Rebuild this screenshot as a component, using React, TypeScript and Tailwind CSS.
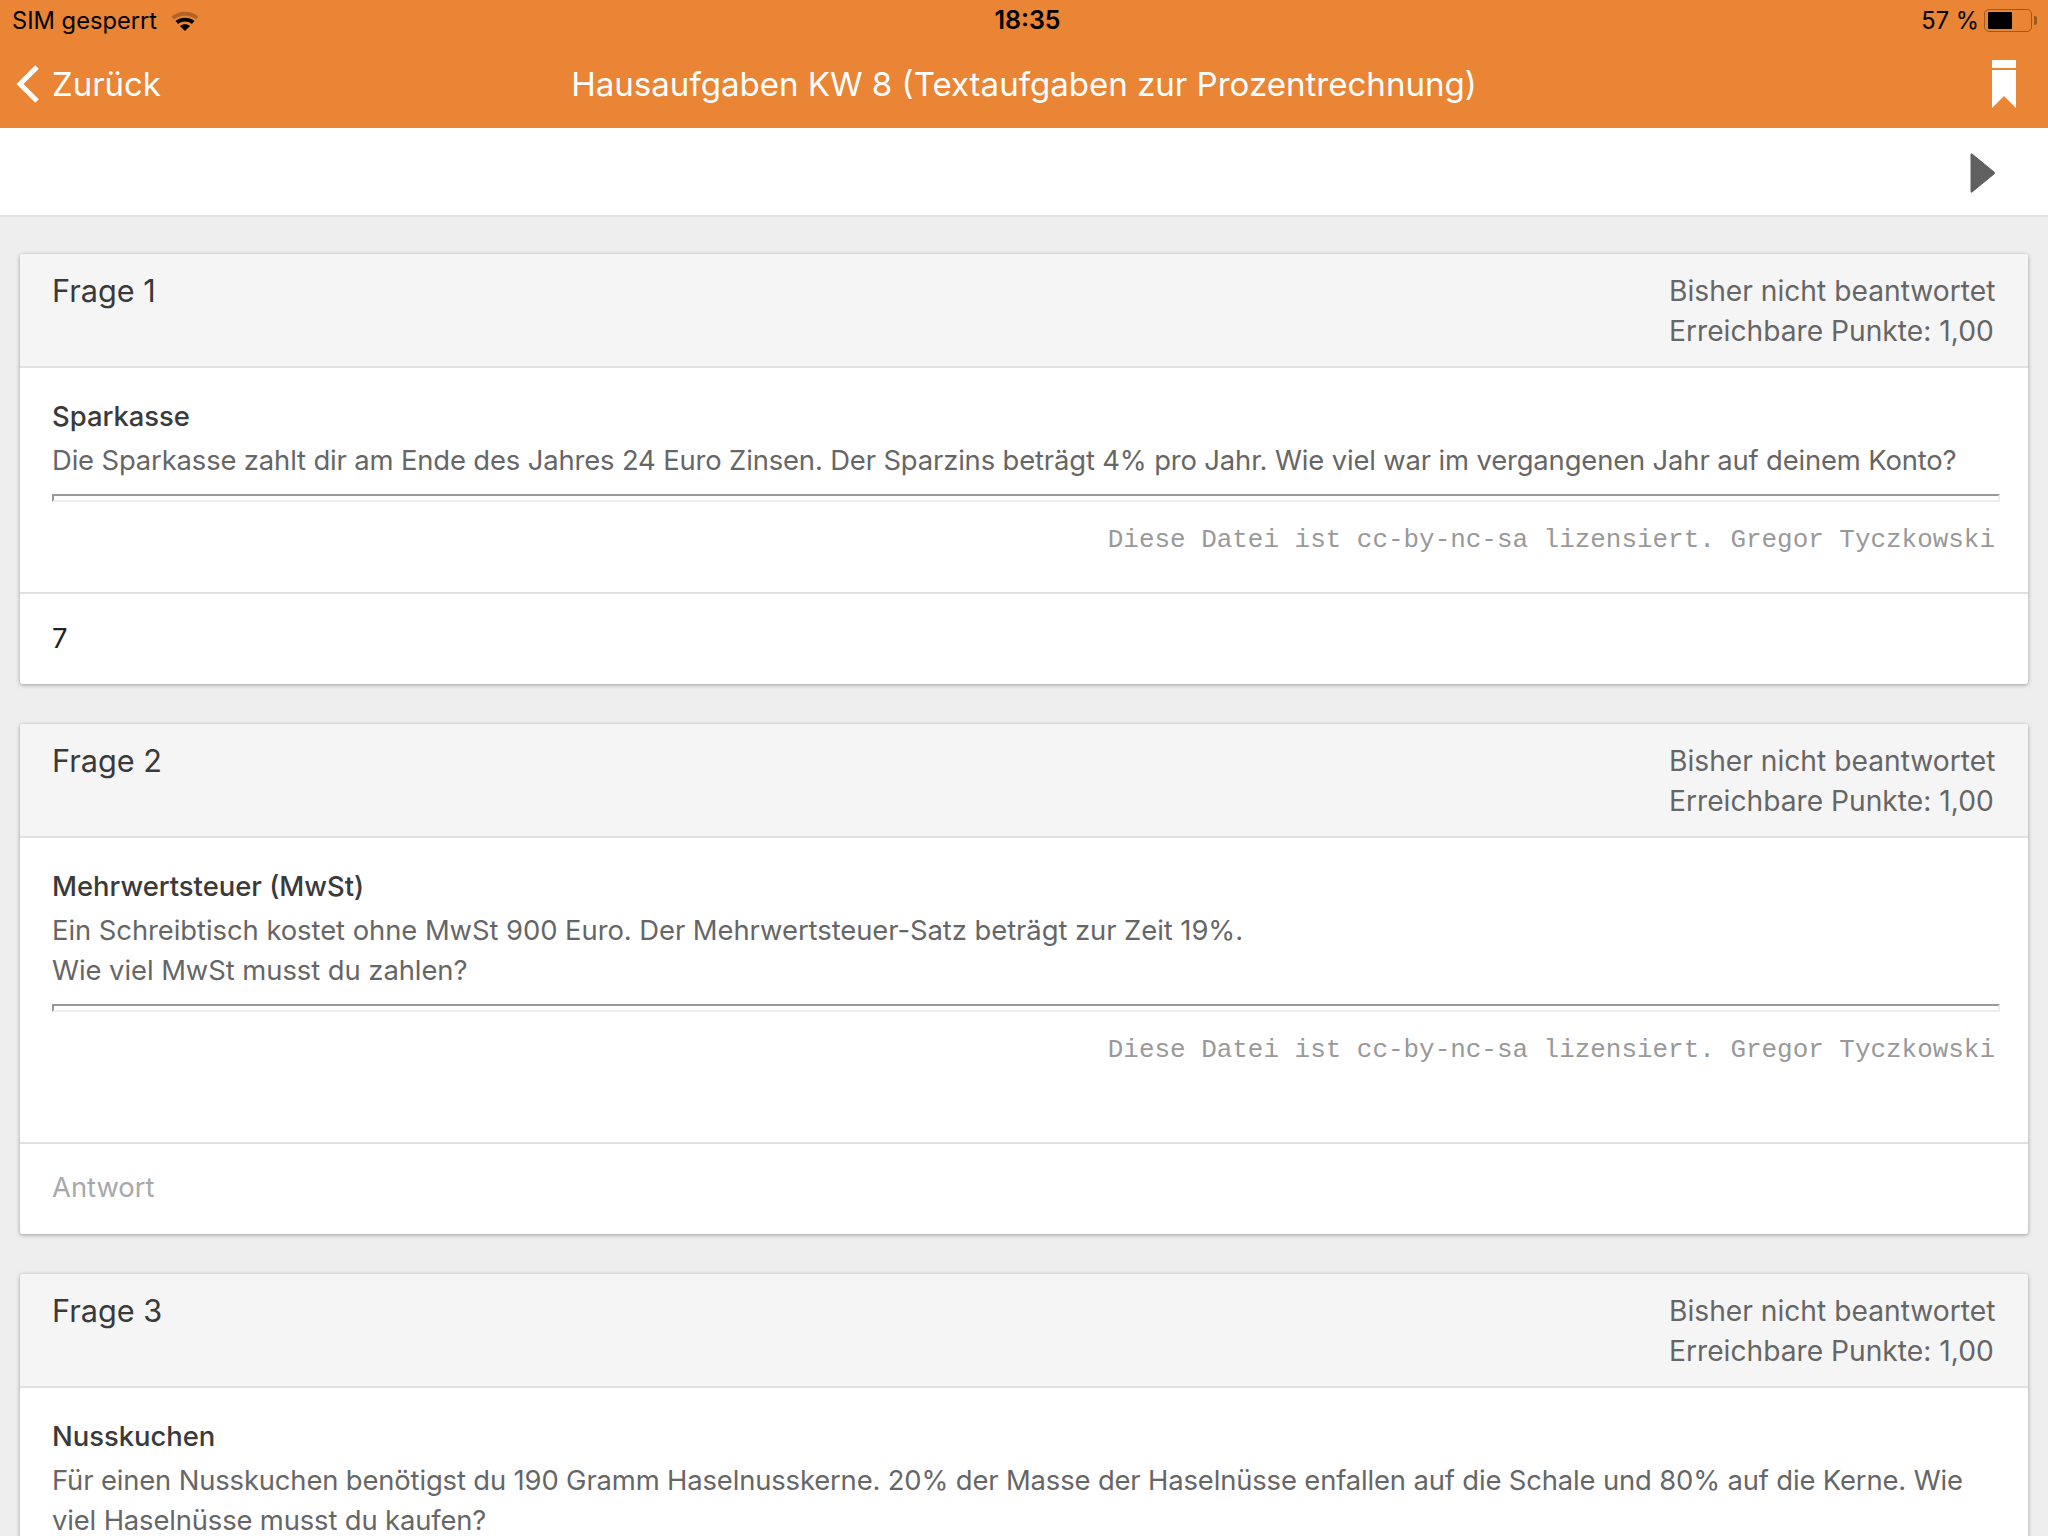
import React from 'react';

interface Question {
  id: number;
  title: string;
  lines: string[];
  answer?: string;
  placeholder?: string;
  credit?: boolean;
  bodyClass: string;
  textClass: string;
}

const questions: Question[] = [
  {
    id: 1,
    title: 'Sparkasse',
    lines: ['Die Sparkasse zahlt dir am Ende des Jahres 24 Euro Zinsen. Der Sparzins beträgt 4% pro Jahr. Wie viel war im vergangenen Jahr auf deinem Konto?'],
    answer: '7',
    credit: true,
    bodyClass: 'h-[226px]',
    textClass: 'tracking-[-0.14px]',
  },
  {
    id: 2,
    title: 'Mehrwertsteuer (MwSt)',
    lines: ['Ein Schreibtisch kostet ohne MwSt 900 Euro. Der Mehrwertsteuer-Satz beträgt zur Zeit 19%.', 'Wie viel MwSt musst du zahlen?'],
    placeholder: 'Antwort',
    credit: true,
    bodyClass: 'h-[306px]',
    textClass: 'tracking-[-0.05px]',
  },
  {
    id: 3,
    title: 'Nusskuchen',
    lines: ['Für einen Nusskuchen benötigst du 190 Gramm Haselnusskerne. 20% der Masse der Haselnüsse enfallen auf die Schale und 80% auf die Kerne. Wie', 'viel Haselnüsse musst du kaufen?'],
    bodyClass: 'h-[226px]',
    textClass: 'tracking-[-0.14px]',
  },
];

const WifiIcon = () => (
  <svg width="28" height="20" viewBox="0 0 28 20">
    <path d="M0.5 5.5C8 -0.8 20 -0.8 27.5 5.5L25 8.5C19 3.5 9 3.5 3 8.5Z" fill="#000" fillOpacity="0.25" />
    <path d="M4.5 10C10 5.6 18 5.6 23.5 10L20.8 13C16.5 9.8 11.5 9.8 7.2 13Z" fill="#000" />
    <path d="M9 15C12 12.8 16 12.8 19 15L14 20Z" fill="#000" />
  </svg>
);

const BatteryIcon = () => (
  <div className="flex items-center">
    <div className="w-[48px] h-[23px] rounded-[5px] border-[1.5px] border-[#9a5a22] p-[2px] pl-[3px]">
      <div className="w-[24px] h-full bg-black rounded-[1px]" />
    </div>
    <div className="w-[3px] h-[9px] ml-[2px] rounded-r-[2px] bg-[#9a5a22]" />
  </div>
);

const QuestionCard = ({ q }: { q: Question }) => (
  <section className="mb-[40px] bg-white rounded-[3px] shadow-[0_1px_4px_rgba(0,0,0,0.35)]">
    <header className="h-[114px] px-[32px] pt-[17px] flex justify-between bg-[#f5f5f5] border-b-2 border-[#e0e0e0] rounded-t-[3px]">
      <div className="text-[30.7px] leading-[40px] text-[#3a3a3a]">Frage {q.id}</div>
      <div className="w-[327px] text-[28.2px] leading-[40px] text-[#666]">
        <div className="whitespace-nowrap">Bisher nicht beantwortet</div>
        <div className="whitespace-nowrap">Erreichbare Punkte: 1,00</div>
      </div>
    </header>
    <div className={`px-[32px] pt-[28px] border-b-2 border-[#e0e0e0] ${q.bodyClass}`}>
      <div className="text-[27.4px] leading-[40px] font-medium text-[#3a3a3a]">{q.title}</div>
      <div className={`mt-[4px] text-[27.4px] leading-[40px] text-[#666] ${q.textClass}`}>
        {q.lines.map((line) => (
          <div key={line} className="whitespace-nowrap">{line}</div>
        ))}
      </div>
      {q.credit && (
        <>
          <div className="mt-[14px] -mr-[4px] h-[8px] border-t-2 border-l-2 border-[#999] border-r-2 border-r-[#eee] border-b-2 border-b-[#eee]" />
          <div className="mt-[18px] text-right pr-[1px] font-['Liberation_Mono',monospace] text-[25.95px] leading-[40px] text-[#999]">
            Diese Datei ist cc-by-nc-sa lizensiert. Gregor Tyczkowski
          </div>
        </>
      )}
    </div>
    <div className="h-[90px] px-[32px] pb-[1px] flex items-center text-[27.4px]">
      {q.answer ? <span className="text-[#222]">{q.answer}</span> : <span className="-mt-[2px] text-[#a8a8a8]">{q.placeholder}</span>}
    </div>
  </section>
);

export default function App() {
  return (
    <div className="h-[1536px] overflow-hidden bg-[#eeeeee] font-['Inter',sans-serif]">
      <div className="bg-[#e98534] h-[128px]">
        <div className="h-[40px] pl-[12px] pr-[11px] pt-[2px] grid grid-cols-[1fr_auto_1fr] items-center text-[23.7px] text-black">
          <div className="flex items-center gap-[14px]">
            <span>SIM gesperrt</span>
            <WifiIcon />
          </div>
          <div className="font-semibold text-[25px] ml-[6px]">18:35</div>
          <div className="flex items-center justify-end gap-[5px]">
            <span>57 %</span>
            <BatteryIcon />
          </div>
        </div>
        <div className="h-[88px] pl-[16px] pr-[32px] flex items-center justify-between text-white">
          <div className="flex items-center gap-[12px] w-[300px]">
            <svg width="24" height="40" viewBox="0 0 24 40">
              <path d="M21 3L4 20L21 37" fill="none" stroke="#fff" strokeWidth="5" />
            </svg>
            <span className="text-[32.9px] pt-[2px]">Zurück</span>
          </div>
          <h1 className="text-[33.05px] font-normal pt-[2px]">Hausaufgaben KW 8 (Textaufgaben zur Prozentrechnung)</h1>
          <div className="w-[284px] flex justify-end">
            <svg width="24" height="48" viewBox="0 0 24 48">
              <path d="M0 0H24V8H0ZM0 10H24V48L12 36L0 48Z" fill="#fff" />
            </svg>
          </div>
        </div>
      </div>
      <div className="h-[89px] bg-white border-b-2 border-[#e3e3e3] flex items-center justify-end pr-[52px]">
        <svg width="26" height="42" viewBox="0 0 26 42" className="mt-[2px]">
          <path d="M2 2L24 20Q25 21 24 22L2 40Q1 41 1 39V3Q1 1 2 2Z" fill="#606060" stroke="#606060" strokeWidth="1" />
        </svg>
      </div>
      <main className="px-[20px] pt-[37px]">
        {questions.map((q) => (
          <QuestionCard key={q.id} q={q} />
        ))}
      </main>
    </div>
  );
}
